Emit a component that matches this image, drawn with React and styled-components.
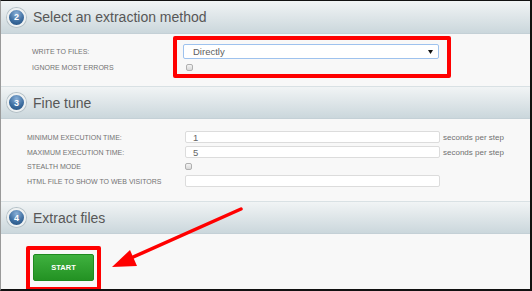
import React from 'react'
import styled, { createGlobalStyle } from 'styled-components'

const Global = createGlobalStyle`
  html, body { margin: 0; padding: 0; background: #fff; }
  body { font-family: "Liberation Sans", Arial, sans-serif; }
`

const Frame = styled.div`
  position: relative;
  width: 532px;
  height: 291px;
  box-sizing: border-box;
  border-top: 1px solid #111;
  border-right: 2px solid #111;
  border-bottom: 2px solid #111;
  border-left: 1px solid #9a9a9a;
  background: #f8f8f8;
  overflow: hidden;
`

const Header = styled.div`
  display: flex;
  align-items: center;
  gap: 7px;
  height: ${p => (p.$first ? 32 : 31)}px;
  padding-left: 5px;
  border-top: ${p => (p.$first ? 'none' : '1px solid #d9e1e4')};
  border-bottom: 1px solid #c4d0d6;
  background: linear-gradient(#f1f4f5, #cbd7dc);
`

const Badge = styled.div`
  width: 15px;
  height: 15px;
  border-radius: 50%;
  border: 2px solid #eef1f2;
  box-shadow: 0 0 0 1px #b4c0c6;
  background: radial-gradient(circle at 50% 25%, #8ab0d8 0%, #3f6fa1 55%, #1d4a7a 100%);
  color: #fff;
  font-size: 9px;
  font-weight: bold;
  display: flex;
  align-items: center;
  justify-content: center;
  margin-left: 1px;
`

const Title = styled.div`
  font-size: 14px;
  color: #575757;
`

const Body = styled.div`
  position: relative;
  box-sizing: border-box;
  height: ${p => p.$h}px;
  padding: ${p => p.$pt}px 0 0 ${p => p.$pl}px;
`

const Form = styled.div`
  display: grid;
  grid-template-columns: ${p => p.$label}px auto;
  row-gap: ${p => p.$gap}px;
  align-items: center;
`

const Label = styled.div`
  font-size: 7px;
  color: #737373;
  text-transform: uppercase;
  white-space: nowrap;
`

const Field = styled.div`
  display: flex;
  align-items: center;
  gap: 3px;
  height: ${p => p.$h}px;
`

const Select = styled.div`
  box-sizing: border-box;
  width: 256px;
  height: 15px;
  border: 1px solid #9ec2ee;
  border-radius: 2px;
  background: #fff;
  display: flex;
  align-items: center;
  justify-content: space-between;
  padding: 0 5px 0 9px;
  font-size: 9.5px;
  color: #606060;
`

const Input = styled.input`
  box-sizing: border-box;
  width: 255px;
  height: 12px;
  margin: 0;
  border: 1px solid #dcdcdc;
  border-radius: 2px;
  background: #fff;
  padding: 0 0 0 7px;
  font-family: "Liberation Sans", Arial, sans-serif;
  font-size: 9.5px;
  color: #666;
  outline: none;
`

const Check = styled.div`
  box-sizing: border-box;
  width: 7px;
  height: 7px;
  margin-left: ${p => p.$ml || 0}px;
  border: 1px solid #b0b0b0;
  border-radius: 2px;
  background: linear-gradient(#f4f4f4, #d8d8d8);
`

const Unit = styled.span`
  font-size: 8px;
  color: #707070;
  white-space: nowrap;
`

const Highlight = styled.div`
  position: absolute;
  left: ${p => p.$x}px;
  top: ${p => p.$y}px;
  width: ${p => p.$w}px;
  height: ${p => p.$h}px;
  box-sizing: border-box;
  border: 4px solid #ff0000;
  border-radius: 2px;
`

const ButtonBox = styled.div`
  display: inline-block;
  border: 4px solid #ff0000;
  border-radius: 2px;
  padding: 4px 3px 6px 3px;
`

const StartButton = styled.button`
  display: block;
  box-sizing: border-box;
  width: 61px;
  height: 27px;
  margin: 0;
  border: 1px solid #1f8a1f;
  border-radius: 2px;
  background: linear-gradient(#3fb13f, #239223);
  color: #fff;
  font-family: "Liberation Sans", Arial, sans-serif;
  font-size: 7.5px;
  font-weight: bold;
  padding: 0;
`

const Overlay = styled.svg`
  position: absolute;
  left: 0;
  top: 0;
  pointer-events: none;
`

function SectionHeader({ num, title, first }) {
  return (
    <Header $first={first}>
      <Badge>{num}</Badge>
      <Title>{title}</Title>
    </Header>
  )
}

export default function App() {
  return (
    <Frame>
      <Global />
      <SectionHeader num="2" title="Select an extraction method" first />
      <Body $h={52} $pt={10} $pl={31}>
        <Form $label={151} $gap={0}>
          <Label>Write to files:</Label>
          <Field $h={15}>
            <Select>
              <span>Directly</span>
              <svg width="5" height="4" viewBox="0 0 5 4">
                <path d="M0 0H5L2.5 4Z" fill="#111" />
              </svg>
            </Select>
          </Field>
          <Label>Ignore most errors</Label>
          <Field $h={16}>
            <Check $ml={3} />
          </Field>
        </Form>
        <Highlight $x={172} $y={2} $w={278} $h={42} />
      </Body>

      <SectionHeader num="3" title="Fine tune" />
      <Body $h={82} $pt={12} $pl={26}>
        <Form $label={158} $gap={3}>
          <Label>Minimum execution time:</Label>
          <Field $h={12}>
            <Input defaultValue="1" readOnly />
            <Unit>seconds per step</Unit>
          </Field>
          <Label>Maximum execution time:</Label>
          <Field $h={12}>
            <Input defaultValue="5" readOnly />
            <Unit>seconds per step</Unit>
          </Field>
          <Label>Stealth mode</Label>
          <Field $h={11}>
            <Check />
          </Field>
          <Label>HTML file to show to web visitors</Label>
          <Field $h={12}>
            <Input defaultValue="" readOnly />
          </Field>
        </Form>
      </Body>

      <SectionHeader num="4" title="Extract files" />
      <Body $h={60} $pt={12} $pl={25}>
        <ButtonBox>
          <StartButton>START</StartButton>
        </ButtonBox>
      </Body>

      <Overlay width="532" height="291" viewBox="0 0 532 291">
        <line x1="240" y1="208" x2="130" y2="257" stroke="#ff0000" strokeWidth="3.5" strokeLinecap="round" />
        <polygon points="111,266 129,249 136,265" fill="#ff0000" />
      </Overlay>
    </Frame>
  )
}
